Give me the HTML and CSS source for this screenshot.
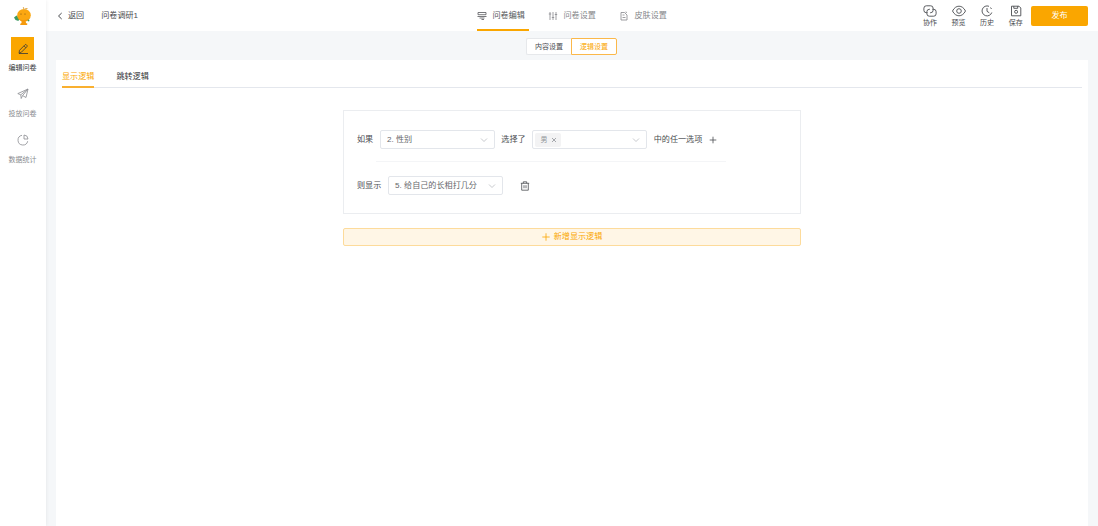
FILE: index.html
```html
<!DOCTYPE html>
<html lang="zh-CN">
<head>
    <meta charset="UTF-8">
    <meta name="viewport" content="width=device-width, initial-scale=1.0">
    <title>问卷调研1</title>
    <link rel="stylesheet" href="styles.css">
</head>
<body>
    <div class="sidebar">
        <svg class="logo" viewBox="0 0 20 20">
            <path d="M1 11.500l2.500-2 3 2.500-1 3-3-1z" fill="#3d9a63"/>
            <path d="M8.500 14h4l.5 3 1.500.8-.5 1.200H7.500L7 18l1.500-1z" fill="#f59a0c"/>
            <ellipse cx="11" cy="9.200" rx="6.800" ry="6.300" fill="#fba710"/>
            <path d="M5.500 12.500c3 2 7 2 10.500 0-2.500 4-8 4-10.500 0z" fill="#f4960e"/>
            <path d="M10.300 3.500L9.800 1l1.200.3.200 1.700c1-1.200 2.500-1.300 3.600-.8-.8 1.400-2.600 1.700-4.500 1.300z" fill="#e2b05a"/>
            <circle cx="8" cy="8" r=".6" fill="#7c5514"/>
            <circle cx="12" cy="8" r=".6" fill="#7c5514"/>
            <path d="M14.500 14l1.500-.5.500 1.500-1.500.5z" fill="#3d9a63"/>
        </svg>
        <div class="nav-item active">
            <div class="nav-icon">
                <svg viewBox="0 0 12 12"><path d="M2 10.300l.5-3L8 1.800a1 1 0 0 1 1.400 0l.5.5a1 1 0 0 1 0 1.400L4.500 9.100zM7 2.900l1.900 1.900M2 10.500h9"/></svg>
            </div>
            <span>编辑问卷</span>
        </div>
        <div class="nav-item">
            <div class="nav-icon">
                <svg viewBox="0 0 12 12"><path d="M.8 5.600L11 1 9 9.500 5.600 7.600 4.200 10.500 3.800 6.800zM3.800 6.800L11 1 5.600 7.600"/></svg>
            </div>
            <span>投放问卷</span>
        </div>
        <div class="nav-item">
            <div class="nav-icon">
                <svg viewBox="0 0 12 12"><path d="M5 1.300a4.900 4.900 0 1 0 5.700 5.900M7 1v4h4A4.200 4.200 0 0 0 7 1z"/></svg>
            </div>
            <span>数据统计</span>
        </div>
    </div>

    <div class="main">
        <div class="header">
            <div class="header-left">
                <svg class="back-icon" viewBox="0 0 6 8"><path d="M4.700 1L1.500 4l3.200 3"/></svg>
                <span class="back">返回</span>
                <span class="title">问卷调研1</span>
            </div>
            <div class="tabs">
                <div class="tab active">
                    <svg viewBox="0 0 10 10"><path d="M1 1.500h8v2.200H1zM.5 5.500h9M2.500 7h5M4.500 8.500h2.500"/></svg>
                    <span>问卷编辑</span>
                </div>
                <div class="tab">
                    <svg viewBox="0 0 10 10"><path d="M2 1v8M5 1v8M8 1v8M.8 3h2.400M3.800 6.500h2.400M6.800 3.500h2.400"/></svg>
                    <span>问卷设置</span>
                </div>
                <div class="tab">
                    <svg viewBox="0 0 10 10"><path d="M5.500 1.500H2V9h6V4M3.500 4h2M3.500 6.500h3M5.500 1.500L8 4M6.500 1l1.500.5"/></svg>
                    <span>皮肤设置</span>
                </div>
            </div>
            <div class="actions">
                <div class="action">
                    <svg viewBox="0 0 14 12"><path d="M4.500 7.700H3.300A2.400 2.400 0 0 1 .9 5.300V3.200A2.400 2.400 0 0 1 3.300.8h4.400a2.400 2.400 0 0 1 2.400 2.400v2.100a2.400 2.400 0 0 1-2.400 2.400H7M9.500 4.300h1.200a2.400 2.400 0 0 1 2.400 2.400v2.100a2.400 2.400 0 0 1-2.400 2.400H6.300a2.400 2.400 0 0 1-2.400-2.400V6.700a2.400 2.400 0 0 1 2.400-2.400H7"/></svg>
                    <span>协作</span>
                </div>
                <div class="action">
                    <svg viewBox="0 0 14 12"><path d="M.5 6C2.200 2.700 4.500 1.200 7 1.200S11.800 2.700 13.500 6C11.800 9.300 9.500 10.800 7 10.800S2.200 9.300.5 6z"/><circle cx="7" cy="6" r="2.300"/></svg>
                    <span>预览</span>
                </div>
                <div class="action">
                    <svg viewBox="0 0 14 12"><path d="M9 1.300A5 5 0 1 0 11.800 7.500M7 3v3.300l2.300 1.500M10.500 2.500l1 1.500"/></svg>
                    <span>历史</span>
                </div>
                <div class="action">
                    <svg viewBox="0 0 14 12"><path d="M2.500 1.200h7.500l1.800 1.800v7.800H2.500zM4.800 1.200v2.100h3.900V1.200"/><circle cx="7.100" cy="6.800" r="1.500"/></svg>
                    <span>保存</span>
                </div>
                <button class="publish">发布</button>
            </div>
        </div>

        <div class="sub-header">
            <div class="switch">
                <span class="switch-item">内容设置</span>
                <span class="switch-item active">逻辑设置</span>
            </div>
        </div>

        <div class="panel">
            <div class="logic-tabs">
                <span class="logic-tab active">显示逻辑</span>
                <span class="logic-tab">跳转逻辑</span>
            </div>

            <div class="logic">
                <div class="rule">
                    <div class="rule-row condition">
                        <span>如果</span>
                        <div class="select">
                            <span>2. 性别</span>
                            <svg class="arrow" viewBox="0 0 8 8"><path d="M1 2.500l3 3 3-3"/></svg>
                        </div>
                        <span>选择了</span>
                        <div class="select multiple">
                            <span class="tag">男<svg viewBox="0 0 6 6"><path d="M1 1l4 4M5 1L1 5"/></svg></span>
                            <svg class="arrow" viewBox="0 0 8 8"><path d="M1 2.500l3 3 3-3"/></svg>
                        </div>
                        <span>中的任一选项</span>
                        <svg class="plus" viewBox="0 0 8 8"><path d="M4 .7v6.600M.7 4h6.600"/></svg>
                    </div>
                    <div class="divider"></div>
                    <div class="rule-row">
                        <span>则显示</span>
                        <div class="select">
                            <span>5. 给自己的长相打几分</span>
                            <svg class="arrow" viewBox="0 0 8 8"><path d="M1 2.500l3 3 3-3"/></svg>
                        </div>
                        <svg class="trash" viewBox="0 0 10 10"><path d="M.8 2.300h8.400M3.300 2.300V.8h3.400v1.500M1.700 2.300v6.900h6.600V2.300M4 4.200v3M6 4.200v3"/></svg>
                    </div>
                </div>
                <button class="add-rule">
                    <svg class="plus" viewBox="0 0 8 8"><path d="M4 .3v7.400M.3 4h7.400"/></svg>
                    新增显示逻辑
                </button>
            </div>
        </div>
    </div>
</body>
</html>
```

FILE: styles.css
```css
* {
    box-sizing: border-box;
}
body {
    margin: 0;
    display: flex;
    height: 100vh;
    overflow: hidden;
    background: #f5f7f9;
    color: #4a4c50;
    font-family: "Liberation Sans", "Noto Sans CJK SC", sans-serif;
    font-size: 8.1px;
    line-height: 12px;
    white-space: nowrap;
}
svg {
    display: block;
    flex: none;
    fill: none;
    stroke: currentColor;
    stroke-width: 0.8;
}
button {
    padding: 0;
    font: inherit;
}

/* sidebar */
.sidebar {
    width: 46px;
    flex: none;
    display: flex;
    flex-direction: column;
    align-items: center;
    padding-top: 6px;
    background: #fff;
    box-shadow: 0 0 4px rgba(0, 0, 0, 0.08);
    z-index: 1;
}
.logo {
    width: 20px;
    height: 20px;
    margin-bottom: 11px;
    stroke: none;
}
.nav-item {
    height: 46px;
    display: flex;
    flex-direction: column;
    align-items: center;
    gap: 2px;
    margin-right: 1px;
    color: #8a8c90;
    font-size: 7px;
}
.nav-icon {
    width: 23px;
    height: 23px;
    display: flex;
    align-items: center;
    justify-content: center;
}
.nav-icon svg {
    width: 12px;
    height: 12px;
    margin-top: -1px;
}
.nav-item.active {
    color: #35373b;
}
.nav-item.active .nav-icon {
    background: #faa600;
}
.nav-item.active svg {
    margin-top: 0;
}

/* header */
.main {
    flex: 1;
    display: flex;
    flex-direction: column;
}
.header {
    height: 31px;
    flex: none;
    display: grid;
    grid-template-columns: 430.5px 1fr auto;
    background: #fff;
}
.header-left {
    display: flex;
    align-items: center;
    padding: 1px 0 0 11px;
}
.back-icon {
    width: 6px;
    height: 8px;
    stroke-width: 1;
}
.back {
    margin-left: 5px;
}
.title {
    margin-left: 17px;
}
.tabs {
    display: flex;
    gap: 19px;
}
.tab {
    width: 52px;
    display: flex;
    align-items: center;
    gap: 6px;
    padding-top: 3px;
    border-bottom: 2px solid transparent;
    color: #85878b;
}
.tab svg {
    width: 10px;
    height: 10px;
}
.tab.active {
    border-color: #faa600;
    color: #55575b;
}
.actions {
    display: flex;
    padding-right: 10px;
}
.action {
    width: 28.6px;
    display: flex;
    flex-direction: column;
    align-items: center;
    padding-top: 5px;
    font-size: 7px;
}
.action svg {
    width: 14px;
    height: 12px;
    stroke-width: 0.9;
}
.publish {
    width: 57px;
    height: 20px;
    margin: 6px 0 0 1px;
    border: 0;
    border-radius: 2px;
    background: #faa600;
    color: #fff;
}

.sub-header {
    height: 29px;
    flex: none;
    display: flex;
    justify-content: center;
    padding: 7px 1px 0 0;
}
.switch {
    display: flex;
    height: 17px;
    font-size: 7px;
}
.switch-item {
    width: 45px;
    border: 1px solid #e6e8eb;
    border-right: 0;
    border-radius: 2px 0 0 2px;
    background: #fff;
    text-align: center;
    line-height: 15px;
}
.switch-item.active {
    width: 46px;
    border: 1px solid #fbb84a;
    border-radius: 0 2px 2px 0;
    color: #faa600;
}

/* content */
.panel {
    flex: 1;
    margin: 0 10px;
    padding: 7px 6px 0;
    background: #fff;
}
.logic-tabs {
    height: 21px;
    display: flex;
    gap: 22px;
    border-bottom: 1px solid #e4e7ed;
}
.logic-tab {
    height: 21px;
    line-height: 20px;
    color: #303133;
}
.logic-tab.active {
    border-bottom: 2px solid #f9b030;
    color: #faa600;
}
.logic {
    width: 458px;
    margin: 22px auto 0;
}
.rule {
    height: 104px;
    padding: 19px 13px 0;
    border: 1px solid #ebedf0;
}
.rule-row {
    display: flex;
    align-items: center;
    gap: 6.8px;
}
.select {
    width: 114.5px;
    height: 19px;
    display: flex;
    align-items: center;
    justify-content: space-between;
    padding: 0 6px;
    border: 1px solid #e3e6eb;
    border-radius: 2px;
    color: #66686c;
}
.select.multiple {
    padding-left: 2px;
}
.arrow {
    width: 8px;
    height: 8px;
    color: #b0b3b9;
    stroke-width: 0.7;
}
.tag {
    height: 14px;
    display: flex;
    align-items: center;
    gap: 4px;
    padding: 0 4px 0 5px;
    border-radius: 2px;
    background: #f3f3f4;
    color: #909399;
    font-size: 7px;
}
.tag svg {
    width: 6px;
    height: 6px;
}
.plus {
    width: 8px;
    height: 8px;
}
.divider {
    width: 350px;
    height: 1px;
    margin: 12px 0 14px 19px;
    background: #f4f5f7;
}
.trash {
    width: 10px;
    height: 10px;
    margin-left: 11px;
}
.add-rule {
    width: 100%;
    height: 18px;
    display: flex;
    align-items: center;
    justify-content: center;
    gap: 4px;
    margin-top: 14px;
    border: 1px solid #fddb9b;
    border-radius: 2px;
    background: #fff6e6;
    color: #faa600;
}
```
